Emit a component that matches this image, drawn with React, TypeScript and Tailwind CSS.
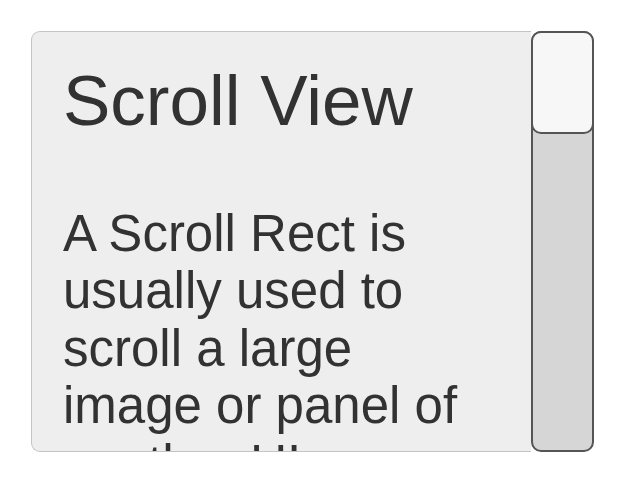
const ScrollView = () => {
  return (
    <div className="min-h-screen bg-white pl-[31px] pt-[31px]">
      <div className="flex h-[421px] w-[563px]">
        <div className="flex-1 overflow-hidden rounded-l-[9px] border border-r-0 border-[#c4c4c4] bg-[#eeeeee] pl-[31px] pt-[28px] font-['Liberation_Sans',Arial,sans-serif] text-[#323232]">
          <h1 className="text-[71px] leading-[1.15]">Scroll View</h1>
          <p className="mt-[63px] w-[420px] text-[51px] leading-[57.5px]">
            A Scroll Rect is usually used to scroll a large image or panel of
            another UI element, such as a list of buttons or large block of
            text.
          </p>
        </div>
        <div className="flex w-[63px] flex-col rounded-[10px] border-2 border-[#555555] bg-[#d6d6d6]">
          <div className="-m-[2px] h-[103px] rounded-[10px] border-2 border-[#555555] bg-[#f7f7f7]" />
        </div>
      </div>
    </div>
  );
};

export default function App() {
  return <ScrollView />;
}
